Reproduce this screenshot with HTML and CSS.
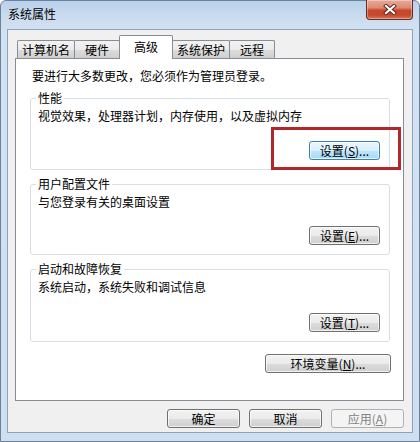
FILE: index.html
```html
<!DOCTYPE html>
<html lang="zh-CN">
<head>
<meta charset="utf-8">
<title>系统属性</title>
<link rel="stylesheet" href="styles.css">
</head>
<body>
<div class="window">
  <div class="titlebar">
    <span class="title">系统属性</span>
    <div class="close">
      <svg width="14" height="11" viewBox="0 0 14 11">
        <path d="M3 2 L11 9 M11 2 L3 9" stroke="#5a2418" stroke-width="4" stroke-linecap="square" fill="none"/>
        <path d="M3 2 L11 9 M11 2 L3 9" stroke="#ffffff" stroke-width="2.2" stroke-linecap="square" fill="none"/>
      </svg>
    </div>
  </div>
  <div class="client">
    <div class="tabs">
      <div class="tab t1">计算机名</div>
      <div class="tab">硬件</div>
      <div class="tab active">高级</div>
      <div class="tab t4">系统保护</div>
      <div class="tab">远程</div>
    </div>
    <div class="panel">
      <div class="intro">要进行大多数更改，您必须作为管理员登录。</div>
      <div class="group g1">
        <div class="legend">性能</div>
        <div class="desc">视觉效果，处理器计划，内存使用，以及虚拟内存</div>
        <button class="btn small focus">设置(<u>S</u>)...</button>
      </div>
      <div class="group g2">
        <div class="legend">用户配置文件</div>
        <div class="desc">与您登录有关的桌面设置</div>
        <button class="btn small">设置(<u>E</u>)...</button>
      </div>
      <div class="group g3">
        <div class="legend">启动和故障恢复</div>
        <div class="desc">系统启动，系统失败和调试信息</div>
        <button class="btn small">设置(<u>T</u>)...</button>
      </div>
      <button class="btn env">环境变量(<u>N</u>)...</button>
    </div>
    <div class="footer">
      <button class="btn wide">确定</button>
      <button class="btn wide">取消</button>
      <button class="btn wide disabled">应用(<u>A</u>)</button>
    </div>
  </div>
  <div class="highlight"></div>
</div>
</body>
</html>
```

FILE: styles.css
```css
* { box-sizing: border-box; }
html, body { margin: 0; padding: 0; }
body {
  width: 420px;
  height: 442px;
  overflow: hidden;
  font-family: "Noto Sans CJK SC", "Noto Sans", sans-serif;
  font-size: 12px;
  color: #000;
  background: #fff;
}
.window {
  position: relative;
  width: 420px;
  height: 442px;
  border: 1px solid #6d819c;
  border-radius: 6px 6px 0 0;
  background: linear-gradient(180deg, #b9d1ea 0px, #c9dbee 14px, #d3e2f2 28px, #cfdff0 100%);
  display: flex;
  flex-direction: column;
}
.titlebar {
  height: 28px;
  display: flex;
  align-items: flex-start;
  padding: 0 6px 0 7px;
}
.title {
  margin-top: 6px;
  line-height: 14px;
  color: #000;
}
.close {
  margin-left: auto;
  margin-top: -1px;
  width: 47px;
  height: 20px;
  border: 1px solid #6b2a1f;
  border-top: none;
  border-radius: 0 0 4px 4px;
  background: linear-gradient(180deg, #e9a99a 0%, #dd8a74 40%, #c8462a 55%, #c24a30 80%, #d6775a 100%);
  box-shadow: inset 0 0 0 1px rgba(255,255,255,0.35);
  display: flex;
  align-items: center;
  justify-content: center;
}
.client {
  margin: 0 6px;
  height: 404px;
  border: 1px solid #8da2bd;
  background: #f0f0f0;
  padding: 5px 8px 0 7px;
  display: flex;
  flex-direction: column;
}
.tabs {
  display: flex;
  align-items: flex-end;
  padding-left: 2px;
  height: 23px;
  position: relative;
  z-index: 2;
}
.tab {
  height: 18px;
  min-width: 46px;
  padding: 0 4px;
  border: 1px solid #898c95;
  border-bottom: none;
  border-radius: 2px 2px 0 0;
  background: linear-gradient(180deg, #f2f2f2 0%, #ebebeb 50%, #dddddd 51%, #cfcfcf 100%);
  margin-left: -1px;
  text-align: center;
  line-height: 16px;
  padding-top: 1px;
}
.tab.t1 { margin-left: 0; }
.tab.active {
  height: 24px;
  min-width: 54px;
  background: #fff;
  margin-bottom: -1px;
  line-height: 18px;
  padding-top: 2px;
  position: relative;
  z-index: 3;
}
.panel {
  height: 343px;
  border: 1px solid #898c95;
  background: #fff;
  padding: 10px 13px 0 14px;
  display: flex;
  flex-direction: column;
  position: relative;
  z-index: 1;
}
.intro {
  line-height: 14px;
  margin-left: 2px;
}
.group {
  border: 1px solid #d5dfe5;
  border-radius: 3px;
  box-shadow: inset 1px 1px 0 #fff;
  padding: 0 9px 9px 7px;
  display: flex;
  flex-direction: column;
}
.g1 { margin-top: 15px; height: 72px; }
.g2 { margin-top: 14px; height: 71px; }
.g3 { margin-top: 14px; height: 73px; }
.legend {
  align-self: flex-start;
  margin-top: -8px;
  margin-left: -2px;
  padding: 0 2px;
  background: #fff;
  line-height: 14px;
}
.desc {
  margin-top: 4px;
  line-height: 14px;
}
.btn {
  font-family: "Noto Sans CJK SC", "Noto Sans", sans-serif;
  font-size: 12px;
  color: #000;
  height: 19px;
  padding: 0;
  line-height: 16px;
  border: 1px solid #707070;
  border-radius: 3px;
  background: linear-gradient(180deg, #f2f2f2 0%, #ebebeb 50%, #dddddd 51%, #cfcfcf 100%);
  box-shadow: inset 0 0 0 1px rgba(255,255,255,0.7);
}
.btn u { text-underline-offset: 1px; }
.small {
  width: 71px;
  margin-top: auto;
  align-self: flex-end;
}
.focus {
  border-color: #3c7fb1;
  background: linear-gradient(180deg, #eaf6fd 0%, #d9f0fc 50%, #bee6fd 51%, #a7d9f5 100%);
}
.env {
  width: 126px;
  margin-top: 12px;
  margin-right: -1px;
  align-self: flex-end;
}
.footer {
  display: flex;
  justify-content: flex-end;
  gap: 9px;
  margin-top: 8px;
}
.wide { width: 73px; }
.disabled {
  color: #838383;
  border-color: #adb2b5;
  background: #f4f4f4;
  box-shadow: none;
}
.highlight {
  position: absolute;
  left: 270px;
  top: 126px;
  width: 130px;
  height: 43px;
  border: 3px solid #b3262a;
  z-index: 5;
}
```
